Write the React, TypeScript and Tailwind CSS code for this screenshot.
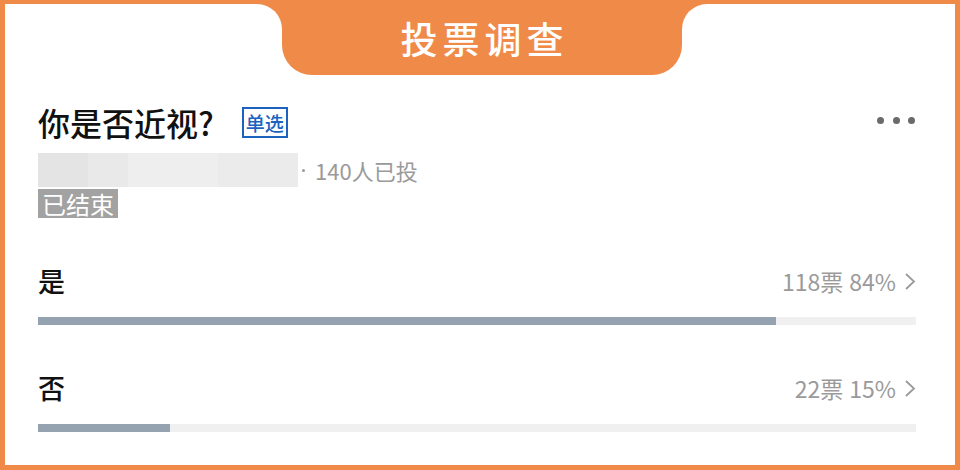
import React from "react";

const ORANGE = "bg-[#EF8A48]";

function Chevron() {
  return (
    <svg width="12" height="17" viewBox="0 0 12 17" className="ml-[8px] shrink-0">
      <polyline points="2,1 10,8.5 2,16" fill="none" stroke="#9a9a9a" strokeWidth="1.8" />
    </svg>
  );
}

function Option({ label, votes, pct, width }: { label: string; votes: number; pct: string; width: number }) {
  return (
    <div className="mt-[45px]">
      <div className="flex items-center justify-between h-[36px]">
        <span className="text-[27px] font-medium text-[#111] leading-[36px]">{label}</span>
        <div className="flex items-center text-[23px] text-[#9a9a9a] leading-[36px]">
          <span>{votes}票</span>
          <span className="ml-[6px]">{pct}</span>
          <Chevron />
        </div>
      </div>
      <div className="mt-[18px] h-[8px] bg-[#f0f0f0] w-full">
        <div className="h-full bg-[#95a3b0]" style={{ width: `${width}%` }} />
      </div>
    </div>
  );
}

export default function App() {
  return (
    <div
      className={`w-[960px] h-[470px] ${ORANGE} pt-[4px] px-[5px] pb-[5px] flex flex-col font-['Noto_Sans_CJK_SC','Noto_Sans',sans-serif]`}
    >
      <div className="flex h-[71px] shrink-0">
        <div className="w-[277px] bg-white rounded-tr-[25px]" />
        <div className="w-[400px] bg-[linear-gradient(to_bottom,transparent_50%,white_50%)]">
          <div className={`h-full ${ORANGE} rounded-b-[30px] flex items-center justify-center pb-[2px]`}>
            <span className="text-white text-[37px] font-medium tracking-[5px] pl-[5px] leading-none">投票调查</span>
          </div>
        </div>
        <div className="flex-1 bg-white rounded-tl-[25px]" />
      </div>
      <div className="flex-1 bg-white pl-[33px] pr-[39px] flex flex-col">
        <div className="mt-[27px] h-[40px] flex items-center justify-between">
          <div className="flex items-center">
            <span className="text-[32px] font-medium text-[#111] leading-[40px]">你是否近视?</span>
            <span className="ml-[28px] w-[46px] h-[31px] border-2 border-[#1c63bf] text-[#1c63bf] text-[19px] font-medium leading-none flex items-center justify-center">
              单选
            </span>
          </div>
          <div className="flex items-center gap-[8.5px] mr-[1px] -mt-[3px]">
            <span className="w-[7px] h-[7px] rounded-full bg-[#6a6a6a]" />
            <span className="w-[7px] h-[7px] rounded-full bg-[#6a6a6a]" />
            <span className="w-[7px] h-[7px] rounded-full bg-[#6a6a6a]" />
          </div>
        </div>
        <div className="mt-[11px] h-[34px] flex items-center">
          <div className="flex h-full w-[260px]">
            <div className="w-[50px] bg-[#e4e4e4]" />
            <div className="w-[40px] bg-[#e9e9e9]" />
            <div className="w-[90px] bg-[#eeeeee]" />
            <div className="w-[80px] bg-[#ebebeb]" />
          </div>
          <span className="ml-[3px] w-[5px] h-[3px] flex items-center justify-center">
            <span className="w-[3px] h-[3px] rounded-full bg-[#9a9a9a]" />
          </span>
          <span className="ml-[9px] text-[22px] text-[#9a9a9a] leading-none">140人已投</span>
        </div>
        <div className="mt-[2px] h-[29px] flex">
          <span className="h-[29px] px-[4px] bg-[#a2a2a2] text-white text-[24px] leading-[29px]">已结束</span>
        </div>
        <Option label="是" votes={118} pct="84%" width={84} />
        <Option label="否" votes={22} pct="15%" width={15} />
      </div>
    </div>
  );
}
